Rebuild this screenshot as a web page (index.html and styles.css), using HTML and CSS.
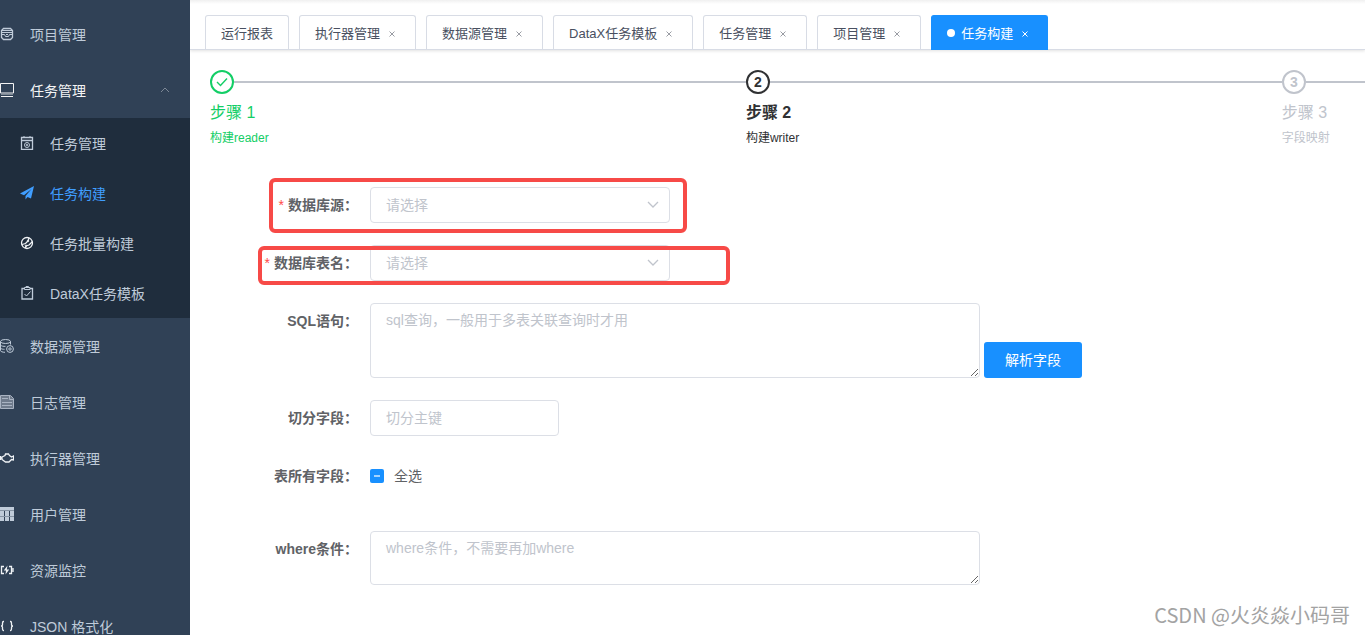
FILE: index.html
```html
<!DOCTYPE html>
<html lang="zh-CN">
<head>
<meta charset="utf-8">
<meta name="viewport" content="width=device-width, initial-scale=1">
<title>任务构建</title>
<link rel="stylesheet" href="styles.css">
</head>
<body>
<div class="app">
  <nav class="sidebar">
    <ul class="menu">
      <li><a class="menu-item" href="#">
        <svg class="icon" viewBox="0 0 14 14"><path class="bold" d="M3.500 1.500h7l2 2v7l-2 2h-7l-2-2v-7z"/><path d="M2 3.500h10M2 5.500h10M2 7.500h2.500l1 2h3l1-2H12M6 7.500h2"/></svg>
        <span>项目管理</span></a></li>
      <li>
        <a class="menu-item menu-item-open" href="#">
          <svg class="icon" viewBox="0 0 14 14"><path d="M.5.5h13v9.500H.5zM1 13.500h12"/><path d="M1 11.500h12" opacity=".4"/></svg>
          <span>任务管理</span>
          <svg class="menu-arrow" viewBox="0 0 10 6"><path d="M1 5l4-4 4 4"/></svg></a>
        <ul class="submenu">
          <li><a class="submenu-item" href="#">
            <svg class="icon" viewBox="0 0 14 14"><path class="bold" d="M1.500 1.500h11v12h-11zM1.500 4.500h11"/><path d="M4 0v2M10 0v2"/><circle cx="7" cy="9" r="2.500"/><circle cx="7" cy="9" r=".8"/></svg>
            <span>任务管理</span></a></li>
          <li><a class="submenu-item submenu-item-active" href="#">
            <svg class="icon" viewBox="0 0 14 14"><path class="solid" d="M14 0L0 7.500l4 1.800L11.500 3 5.500 10v3.500l2-2.500 3.500 1.500z"/></svg>
            <span>任务构建</span></a></li>
          <li><a class="submenu-item" href="#">
            <svg class="icon icon-bright" viewBox="0 0 14 14"><circle class="bold" cx="7" cy="7" r="5.500"/><path class="bold" d="M2 8.500l3.500-1L8 5l1-3M5.500 12l.5-2 3-1 3.500-3.500"/><circle cx="8" cy="5" r=".8"/><circle cx="6" cy="9.800" r=".8"/></svg>
            <span>任务批量构建</span></a></li>
          <li><a class="submenu-item" href="#">
            <svg class="icon" viewBox="0 0 14 14"><path class="bold" d="M4.500 2.500h-2.500v10.500h10.500v-10.500h-2.500"/><path d="M4.500 1.500h5.500v2h-5.500zM6 1.500v-1h2.500v1M4.500 8l2 2 4-4.500"/></svg>
            <span>DataX任务模板</span></a></li>
        </ul>
      </li>
      <li><a class="menu-item" href="#">
        <svg class="icon" viewBox="0 0 14 14"><ellipse cx="5.500" cy="2.500" rx="5" ry="2"/><path d="M.5 2.500v9c0 1 2 1.800 4.500 1.800M10.500 2.500v3M.5 6c1 1.200 3 1.500 5 1.300M.5 9c1 1.200 2.500 1.300 4 1.300"/><circle cx="10" cy="10" r="3.400"/><circle cx="10" cy="10" r="1.200"/></svg>
        <span>数据源管理</span></a></li>
      <li><a class="menu-item" href="#">
        <svg class="icon icon-muted" viewBox="0 0 14 14"><path class="tint" d="M.5.5h10l3 3v10H.5z"/><path d="M2 3.500h6M9.500 1v3.500h3.500M2 7.500h10M2 10.500h10"/></svg>
        <span>日志管理</span></a></li>
      <li><a class="menu-item" href="#">
        <svg class="icon icon-bright" viewBox="0 0 14 14"><path class="bold" d="M.5 5v4M.5 7h1.500M2 6l3-1.500.5-1.500h3l1 1.500 2 1.500 2-1v4l-2-.5-2.500 2.500H5.500L2 8.500z"/></svg>
        <span>执行器管理</span></a></li>
      <li><a class="menu-item" href="#">
        <svg class="icon" viewBox="0 0 14 14"><path class="solid" d="M0 0h14v3H0zM0 4h4v5H0zM5 4h4v5H5zM10 4h4v5h-4zM0 10h4v4H0zM5 10h4v4H5zM10 10h4v4h-4z"/><path class="solid" opacity=".6" d="M0 3h14v1H0zM0 9h14v1H0z"/></svg>
        <span>用户管理</span></a></li>
      <li><a class="menu-item" href="#">
        <svg class="icon icon-bright" viewBox="0 0 14 14"><path class="bold" d="M4 3.500H1.500v7H4M9 3.500h2.500v7H9M13 5v4"/><path class="solid" d="M7.500 2.500L3.800 7.500h2.200L5.500 11.500 9.200 6.500H6.800z"/></svg>
        <span>资源监控</span></a></li>
      <li><a class="menu-item" href="#">
        <svg class="icon icon-bright" viewBox="0 0 14 14"><path class="bold" d="M4 2.500H3.500Q2.500 2.500 2.500 4v1.500Q2.500 7 1 7q1.500 0 1.500 1.500V10q0 1.500 1 1.500H4M10 2.500h.5q1 0 1 1.500v1.500Q11.500 7 13 7q-1.500 0-1.500 1.500V10q0 1.500-1 1.500H10"/></svg>
        <span>JSON 格式化</span></a></li>
    </ul>
  </nav>

  <main class="main">
    <div class="tabs">
      <div class="tab"><a href="#">运行报表</a></div>
      <div class="tab"><a href="#">执行器管理</a><button class="tab-close" type="button" aria-label="关闭"><svg viewBox="0 0 6 6"><path d="M.5.5l5 5M5.500.5l-5 5"/></svg></button></div>
      <div class="tab"><a href="#">数据源管理</a><button class="tab-close" type="button" aria-label="关闭"><svg viewBox="0 0 6 6"><path d="M.5.5l5 5M5.500.5l-5 5"/></svg></button></div>
      <div class="tab"><a href="#">DataX任务模板</a><button class="tab-close" type="button" aria-label="关闭"><svg viewBox="0 0 6 6"><path d="M.5.5l5 5M5.500.5l-5 5"/></svg></button></div>
      <div class="tab"><a href="#">任务管理</a><button class="tab-close" type="button" aria-label="关闭"><svg viewBox="0 0 6 6"><path d="M.5.5l5 5M5.500.5l-5 5"/></svg></button></div>
      <div class="tab"><a href="#">项目管理</a><button class="tab-close" type="button" aria-label="关闭"><svg viewBox="0 0 6 6"><path d="M.5.5l5 5M5.500.5l-5 5"/></svg></button></div>
      <div class="tab tab-active"><a href="#">任务构建</a><button class="tab-close" type="button" aria-label="关闭"><svg viewBox="0 0 6 6"><path d="M.5.5l5 5M5.500.5l-5 5"/></svg></button></div>
    </div>

    <ol class="steps">
      <li class="step step-done">
        <div class="step-head"><span class="step-mark"><svg viewBox="0 0 12 10"><path d="M1 5l3.500 3.500L11 1.500"/></svg></span></div>
        <div class="step-title">步骤 1</div>
        <div class="step-text">构建reader</div>
      </li>
      <li class="step step-current">
        <div class="step-head"><span class="step-mark">2</span></div>
        <div class="step-title">步骤 2</div>
        <div class="step-text">构建writer</div>
      </li>
      <li class="step">
        <div class="step-head"><span class="step-mark">3</span></div>
        <div class="step-title">步骤 3</div>
        <div class="step-text">字段映射</div>
      </li>
    </ol>

    <form class="form">
      <div class="row">
        <label class="label required" for="source">数据库源：</label>
        <div class="select-wrap">
          <select class="field" id="source"><option>请选择</option></select>
          <svg class="chevron" viewBox="0 0 12 8"><path d="M1 1l5 5 5-5"/></svg>
        </div>
        <span class="highlight highlight-source"></span>
      </div>
      <div class="row">
        <label class="label required" for="table">数据库表名：</label>
        <div class="select-wrap">
          <select class="field" id="table"><option>请选择</option></select>
          <svg class="chevron" viewBox="0 0 12 8"><path d="M1 1l5 5 5-5"/></svg>
        </div>
        <span class="highlight highlight-table"></span>
      </div>
      <div class="row">
        <label class="label" for="sql">SQL语句：</label>
        <textarea class="field area area-sql" id="sql" placeholder="sql查询，一般用于多表关联查询时才用"></textarea>
        <button class="primary" type="button">解析字段</button>
      </div>
      <div class="row">
        <label class="label" for="split">切分字段：</label>
        <input class="field split" id="split" type="text" placeholder="切分主键">
      </div>
      <div class="row row-columns">
        <span class="label">表所有字段：</span>
        <label class="check"><input type="checkbox" aria-checked="mixed">全选</label>
      </div>
      <div class="row">
        <label class="label" for="where">where条件：</label>
        <textarea class="field area area-where" id="where" placeholder="where条件，不需要再加where"></textarea>
      </div>
    </form>
  </main>
  <div class="watermark">CSDN @火炎焱小码哥</div>
</div>
</body>
</html>
```

FILE: styles.css
```css
* { box-sizing: border-box; }

body {
  margin: 0;
  font-family: "Liberation Sans", "Noto Sans CJK SC", sans-serif;
  font-size: 14px;
  color: #606266;
  background: #fff;
}

a { color: inherit; text-decoration: none; }
ul, ol { list-style: none; margin: 0; padding: 0; }
button, input, select, textarea { font: inherit; }
svg { fill: none; stroke: currentColor; flex: none; }

.app {
  position: relative;
  display: flex;
  height: 100vh;
  overflow: hidden;
}

/* Sidebar */
.sidebar {
  flex: 0 0 190px;
  padding-top: 6px;
  overflow: hidden;
  color: #bfcbd9;
  background: #304156;
}
.menu-item, .submenu-item {
  display: flex;
  align-items: center;
  gap: 16px;
}
.menu-item { height: 56px; padding-right: 20px; }
.menu-item-open { color: #f4f4f5; }
.menu-arrow { width: 10px; height: 6px; margin-left: auto; color: #7d8896; }
.submenu { background: #1f2d3d; }
.submenu-item { height: 50px; padding: 0 20px; }
.submenu-item-active { color: #409eff; }
.icon { width: 14px; height: 14px; }
.icon-bright { color: #f0f3f6; }
.icon-muted { color: #a9b3c2; }
.bold { stroke-width: 1.3; }
.solid { fill: currentColor; stroke: none; }
.tint { fill: #6f7b8c; }

/* Main column */
.main { flex: 1; min-width: 0; overflow: hidden; }

.tabs {
  display: flex;
  gap: 10px;
  height: 50px;
  padding: 15px 15px 0;
  border-bottom: 1px solid #d8dce5;
  background: linear-gradient(#f0f0f0, #fff 4px);
  box-shadow: 0 1px 3px rgba(0, 0, 0, .12);
}
.tab {
  display: flex;
  align-items: center;
  gap: 4px;
  flex: none;
  padding: 0 15px 1px;
  border: 1px solid #d8dce5;
  border-bottom: 0;
  border-radius: 3px 3px 0 0;
  font-size: 13px;
  color: #495060;
  background: #fff;
}
.tab-active {
  margin-bottom: -1px;
  padding: 0 14px 2px 15px;
  border-color: #1890ff;
  color: #fff;
  background: #1890ff;
}
.tab-active::before {
  content: "";
  width: 8px;
  height: 8px;
  margin-top: 2px;
  margin-right: 2px;
  border-radius: 50%;
  background: #fff;
}
.tab-close {
  display: grid;
  place-items: center;
  width: 16px;
  height: 16px;
  padding: 3px 0 0;
  border: 0;
  color: #999ca3;
  background: none;
}
.tab-active .tab-close { color: #fff; }
.tab-close svg { width: 6px; height: 6px; }

/* Steps */
.steps { display: flex; padding: 20px 0 0 20px; color: #c0c4cc; }
.step { flex: 0 0 46.4%; }
.step-head { display: flex; align-items: center; }
.step-head::after { content: ""; flex: 1; height: 2px; background: #c0c4cc; }
.step-mark {
  display: grid;
  place-items: center;
  width: 24px;
  height: 24px;
  border: 2px solid;
  border-radius: 50%;
  font-weight: bold;
  line-height: 16px;
}
.step-mark svg { width: 12px; height: 10px; stroke-width: 1.4; }
.step-title { font-size: 16px; line-height: 38px; }
.step-text { font-size: 12px; line-height: 12px; }
.step-done { color: #13ce66; }
.step-current { color: #303133; }
.step-current .step-title { font-weight: bold; }

/* Form */
.form {
  display: flex;
  flex-direction: column;
  gap: 22px;
  padding: 43px 20px 0 0;
}
.row { position: relative; display: flex; min-height: 36px; }
.row-columns { margin-bottom: 15px; }
.label {
  flex: 0 0 180px;
  padding-right: 12px;
  font-weight: bold;
  line-height: 36px;
  text-align: right;
}
.required::before { content: "*"; margin-right: 4px; font-weight: normal; color: #ff4949; }
.field {
  height: 36px;
  padding: 0 15px;
  border: 1px solid #dcdfe6;
  border-radius: 4px;
  outline: 0;
  color: #606266;
  background: #fff;
}
.field::placeholder { color: #c0c4cc; opacity: 1; }
.select-wrap { position: relative; flex: 0 1 300px; }
.select-wrap .field { width: 100%; color: #c0c4cc; appearance: none; }
.chevron {
  position: absolute;
  top: 14px;
  right: 11px;
  width: 12px;
  height: 8px;
  color: #c0c4cc;
  stroke-width: 1.3;
  pointer-events: none;
}
.area { flex: 0 1 610px; min-width: 0; padding: 6px 15px; line-height: 21px; resize: vertical; }
.area-sql { height: 75px; }
.area-where { height: 54px; }
.split { width: 189px; }
.primary {
  align-self: flex-end;
  height: 36px;
  margin-left: 4px;
  padding: 0 21px 2px;
  border: 0;
  border-radius: 3px;
  color: #fff;
  background: #1890ff;
}
.check { display: flex; align-items: center; gap: 10px; height: 36px; line-height: 36px; }
.check input {
  display: grid;
  place-items: center;
  width: 14px;
  height: 14px;
  margin: 0;
  border-radius: 2px;
  background: #1890ff;
  appearance: none;
}
.check input::before { content: ""; width: 6px; height: 2px; background: #a3d3ff; }

/* Callout frames drawn over the required rows */
.highlight {
  position: absolute;
  border: 4px solid #f74a47;
  border-radius: 6px;
  pointer-events: none;
}
.highlight-source { top: -9px; left: 79px; width: 418px; height: 55px; }
.highlight-table { top: 1px; left: 68px; width: 472px; height: 39px; }

.watermark {
  position: absolute;
  right: 15px;
  bottom: 6px;
  font-family: "Noto Sans CJK SC", sans-serif;
  font-size: 20px;
  line-height: 28px;
  color: #a3a3a3;
}
```
